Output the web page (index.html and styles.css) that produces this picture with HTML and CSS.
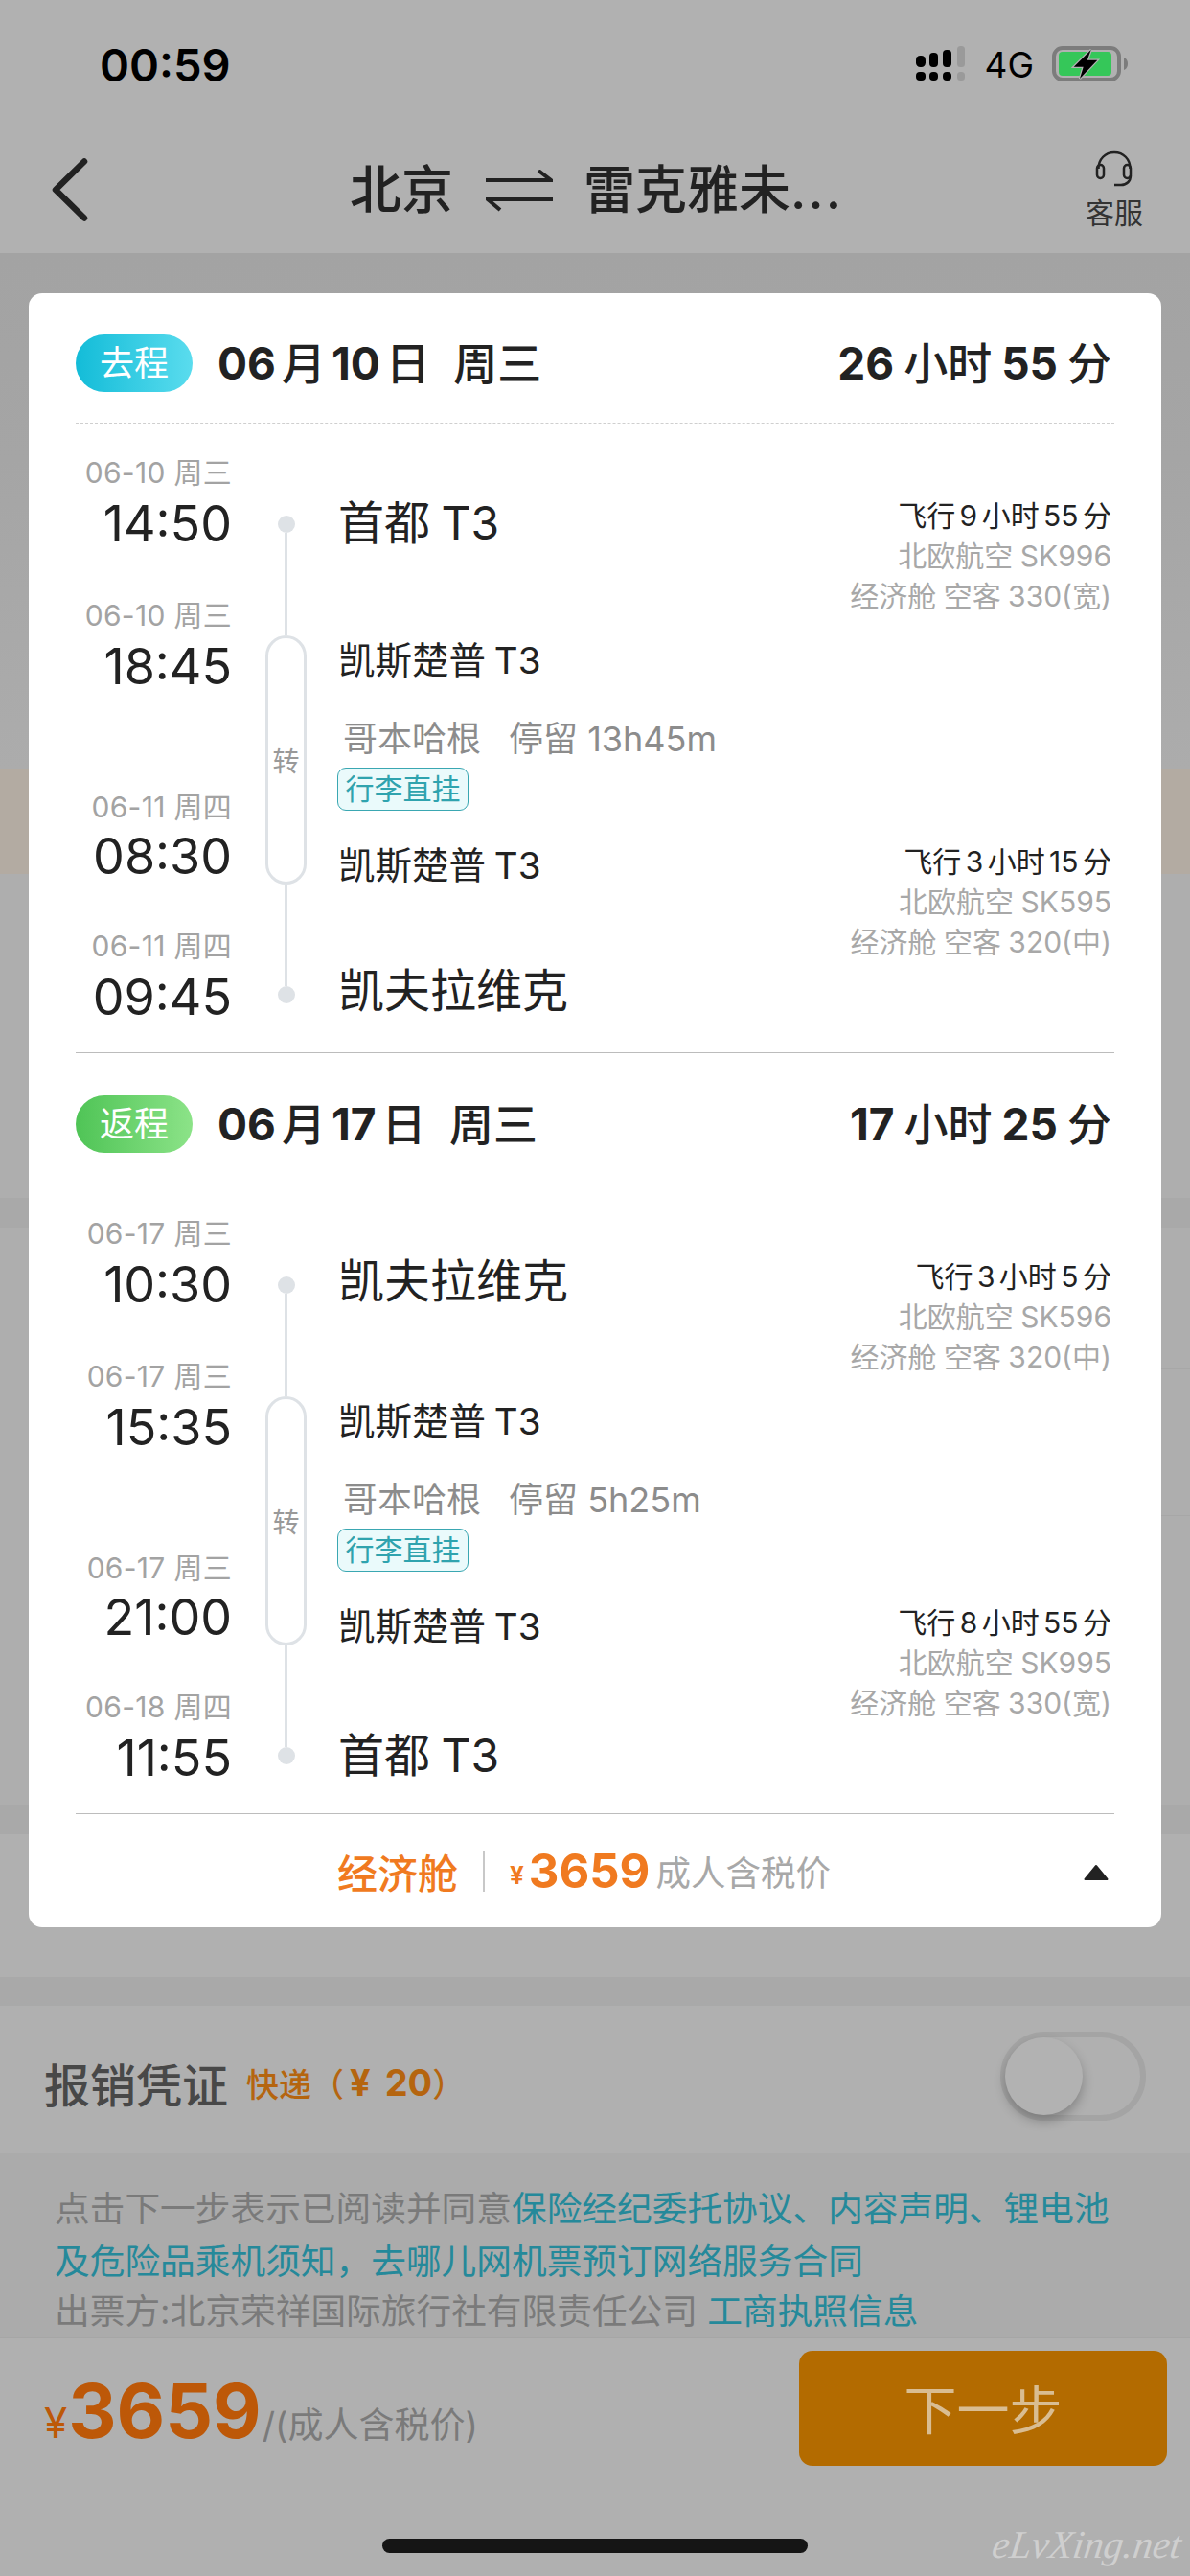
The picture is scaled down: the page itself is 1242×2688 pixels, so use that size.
FILE: index.html
```html
<!DOCTYPE html>
<html lang="zh-CN">
<head>
<meta charset="utf-8">
<title>北京 雷克雅未克</title>
<link rel="stylesheet" href="styles.css">
</head>
<body>
<div class="page">
  <header class="top">
    <div class="status">
      <span class="clock">00:59</span>
      <div class="status-right">
        <svg class="signal" width="52" height="60" viewBox="0 0 52 60">
          <rect x="0" y="16" width="10" height="12" rx="4.5" fill="#000"/>
          <rect x="14" y="13" width="9" height="15" rx="4" fill="#000"/>
          <rect x="28" y="10" width="9" height="18" rx="4" fill="#000"/>
          <rect x="43" y="6" width="8" height="22" rx="3.5" fill="#9a9a9a"/>
          <rect x="0" y="33" width="10" height="9" rx="4" fill="#000"/>
          <rect x="14" y="33" width="9" height="9" rx="4" fill="#000"/>
          <rect x="28" y="33" width="9" height="9" rx="4" fill="#000"/>
          <rect x="43" y="33" width="8" height="9" rx="3.5" fill="#9a9a9a"/>
        </svg>
        <span class="net">4G</span>
        <svg class="battery" width="80" height="38" viewBox="0 0 80 38">
          <rect x="2" y="2" width="68" height="33" rx="9" fill="none" stroke="#7c7c7c" stroke-width="4"/>
          <rect x="7" y="6" width="55" height="25" rx="4" fill="#35c759"/>
          <path d="M75 12c3 1 4 4 4 6.500s-1 5.500-4 6.500z" fill="#7c7c7c"/>
          <path d="M40.700 4L22.700 21.700H32.700L29 34L47.300 14.700H36.700z" fill="#000" stroke="#b1b1b1" stroke-width="2.500" paint-order="stroke"/>
        </svg>
      </div>
    </div>
    <nav class="nav">
      <svg class="back" width="40" height="66" viewBox="0 0 40 66">
        <path d="M35 3.500L5 33L35 62.500" fill="none" stroke="#222" stroke-width="6.500" stroke-linecap="round" stroke-linejoin="round"/>
      </svg>
      <div class="route">
        <span>北京</span>
        <svg class="swap" width="70" height="44" viewBox="0 0 70 44">
          <path d="M0 11H68L55 1M70 31H2L15 42" fill="none" stroke="#222" stroke-width="4"/>
        </svg>
        <span>雷克雅未<span class="dots">...</span></span>
      </div>
      <div class="service">
        <svg width="40" height="38" viewBox="0 0 40 38">
          <path d="M3.500 19C3.500 9 10.500 2 20 2s16.500 7 16.500 17" fill="none" stroke="#222" stroke-width="2.500"/>
          <rect x="2" y="15" width="7" height="14" rx="3.500" fill="none" stroke="#222" stroke-width="2.500"/>
          <rect x="30" y="15" width="7" height="14" rx="3.500" fill="none" stroke="#222" stroke-width="2.500"/>
          <path d="M37 26C37 32 33 36 27 36H20" fill="none" stroke="#222" stroke-width="2.500"/>
        </svg>
        <span>客服</span>
      </div>
    </nav>
  </header>

  <div class="under">
    <div class="u-fade"></div>
    <div class="u-notice"></div>
    <div class="u-rows"></div>
    <div class="u-band"></div>
    <div class="u-list">
      <div class="u-line u-line-a"></div>
      <div class="u-line u-line-b"></div>
    </div>
    <div class="u-band"></div>
    <div class="u-blank"></div>
    <div class="u-band"></div>
  </div>

  <section class="receipt">
    <div class="receipt-text">
      <span class="receipt-title">报销凭证</span>
      <span class="receipt-fee">快递（<b class="fee-yen">¥</b><b>20</b>）</span>
    </div>
    <div class="toggle"><div class="knob"></div></div>
  </section>

  <section class="notice">
    <p class="notice-line">点击下一步表示已阅读并同意<a>保险经纪委托协议、内容声明、锂电池</a></p>
    <p class="notice-line"><a>及危险品乘机须知，去哪儿网机票预订网络服务合同</a></p>
    <p class="notice-line notice-tight">出票方:北京荣祥国际旅行社有限责任公司 <a>工商执照信息</a></p>
  </section>

  <footer class="pay">
    <div class="pay-price">
      <span class="pay-yen">¥</span><span class="pay-num">3659</span><span class="pay-note">/(成人含税价)</span>
    </div>
    <button class="next">下一步</button>
  </footer>

  <div class="home-bar"></div>
  <div class="watermark">eLvXing.net</div>

  <main class="card">
    <section class="leg">
      <div class="leg-head">
        <span class="pill pill-go">去程</span>
        <span class="leg-date"><span class="num">06</span>月<span class="num">10</span>日&nbsp;&nbsp;周三</span>
        <span class="leg-total"><span class="num">26</span>小时<span class="num">55</span>分</span>
      </div>
      <div class="itin">
        <div class="times">
          <div class="tm"><div class="tm-date">06-10 周三</div><div class="tm-clock">14:50</div></div>
          <div class="tm tm-a"><div class="tm-date">06-10 周三</div><div class="tm-clock">18:45</div></div>
          <div class="tm tm-b"><div class="tm-date">06-11 周四</div><div class="tm-clock">08:30</div></div>
          <div class="tm tm-c"><div class="tm-date">06-11 周四</div><div class="tm-clock">09:45</div></div>
        </div>
        <div class="track">
          <i class="dot"></i><i class="rail"></i>
          <div class="capsule">转</div>
          <i class="rail"></i><i class="dot"></i>
        </div>
        <div class="stops">
          <div class="st-big">首都 T3</div>
          <div class="st-small st-first">凯斯楚普 T3</div>
          <div class="stay"><span>哥本哈根</span><span>停留 13h45m</span></div>
          <span class="tag">行李直挂</span>
          <div class="st-small st-after">凯斯楚普 T3</div>
          <div class="st-big st-last">凯夫拉维克</div>
        </div>
        <div class="flights">
          <div class="fl">
            <div class="fl-time">飞行 9 小时 55 分</div>
            <div>北欧航空 SK996</div>
            <div>经济舱 空客 330(宽)</div>
          </div>
          <div class="fl fl-next">
            <div class="fl-time">飞行 3 小时 15 分</div>
            <div>北欧航空 SK595</div>
            <div>经济舱 空客 320(中)</div>
          </div>
        </div>
      </div>
    </section>

    <section class="leg">
      <div class="leg-head">
        <span class="pill pill-back">返程</span>
        <span class="leg-date"><span class="num">06</span>月<span class="num">17</span>日&nbsp;&nbsp;周三</span>
        <span class="leg-total"><span class="num">17</span>小时<span class="num">25</span>分</span>
      </div>
      <div class="itin">
        <div class="times">
          <div class="tm"><div class="tm-date">06-17 周三</div><div class="tm-clock">10:30</div></div>
          <div class="tm tm-a"><div class="tm-date">06-17 周三</div><div class="tm-clock">15:35</div></div>
          <div class="tm tm-b"><div class="tm-date">06-17 周三</div><div class="tm-clock">21:00</div></div>
          <div class="tm tm-c"><div class="tm-date">06-18 周四</div><div class="tm-clock">11:55</div></div>
        </div>
        <div class="track">
          <i class="dot"></i><i class="rail"></i>
          <div class="capsule">转</div>
          <i class="rail"></i><i class="dot"></i>
        </div>
        <div class="stops">
          <div class="st-big">凯夫拉维克</div>
          <div class="st-small st-first">凯斯楚普 T3</div>
          <div class="stay"><span>哥本哈根</span><span>停留 5h25m</span></div>
          <span class="tag">行李直挂</span>
          <div class="st-small st-after">凯斯楚普 T3</div>
          <div class="st-big st-last">首都 T3</div>
        </div>
        <div class="flights">
          <div class="fl">
            <div class="fl-time">飞行 3 小时 5 分</div>
            <div>北欧航空 SK596</div>
            <div>经济舱 空客 320(中)</div>
          </div>
          <div class="fl fl-next">
            <div class="fl-time">飞行 8 小时 55 分</div>
            <div>北欧航空 SK995</div>
            <div>经济舱 空客 330(宽)</div>
          </div>
        </div>
      </div>
    </section>

    <div class="fare">
      <span class="fare-cabin">经济舱</span>
      <i class="fare-sep"></i>
      <span class="fare-yen">¥</span><span class="fare-num">3659</span><span class="fare-note">成人含税价</span>
      <svg class="fare-caret" width="26" height="18" viewBox="0 0 26 18"><path d="M13 2L24.500 16H1.500z" fill="#222" stroke="#222" stroke-width="2" stroke-linejoin="round"/></svg>
    </div>
  </main>
</div>
</body>
</html>
```
FILE: styles.css
```css
* { box-sizing: border-box; }
html, body { margin: 0; padding: 0; }
body {
  font-family: Inter, "Noto Sans CJK SC", sans-serif;
  color: #222;
  background: #b1b1b1;
}
i { display: block; }
p { margin: 0; }

.page {
  position: relative;
  width: 1242px;
  height: 2688px;
  overflow: hidden;
  background: #b1b1b1;
}

/* top bars */
.top { height: 264px; background: #b1b1b1; }
.status {
  height: 132px;
  display: flex;
  justify-content: space-between;
  align-items: flex-start;
  padding: 44px 64px 0 104px;
}
.clock {
  font-size: 47px;
  font-weight: 600;
  line-height: 48px;
  color: #000;
}
.status-right { display: flex; align-items: flex-start; }
.signal { margin: -2px 19px 0 0; }
.net {
  font-size: 37px;
  line-height: 44px;
  color: #000;
  margin-right: 19px;
  margin-top: 2px;
}
.battery { margin-top: 4px; }

.nav {
  height: 132px;
  display: flex;
  align-items: flex-start;
  padding: 0 0 0 53px;
  position: relative;
}
.back { margin-top: 33px; }
.route {
  position: absolute;
  left: 365px;
  top: 29px;
  display: flex;
  align-items: center;
  font-size: 54px;
  line-height: 76px;
  font-weight: 500;
  color: #222;
}
.dots { letter-spacing: 2px; }
.swap { margin: 0 32px 0 34px; }
.service {
  position: absolute;
  left: 1121px;
  top: 25px;
  width: 84px;
  display: flex;
  flex-direction: column;
  align-items: center;
  font-size: 30px;
  line-height: 40px;
  color: #333;
}
.service svg { display: block; margin-bottom: 7px; }

/* dim page behind the card */
.under { display: flex; flex-direction: column; }
.u-fade { height: 538px; background: linear-gradient(180deg, #a3a3a3 0, #a5a5a5 40%, #acacac 100%); }
.u-notice { height: 110px; background: #b3aba2; }
.u-rows { height: 338px; background: #aeaeae; }
.u-band { height: 31px; background: #a9a9a9; }
.u-list { height: 602px; background: #aeaeae; padding-left: 40px; }
.u-line { border-bottom: 1px solid #a7a7a7; }
.u-line-a { height: 148px; }
.u-line-b { height: 153px; }
.u-blank { height: 149px; background: #b0b0b0; }

/* card */
.card {
  position: absolute;
  left: 30px;
  top: 306px;
  width: 1182px;
  padding: 0 49px;
  background: #fff;
  border-radius: 14px;
}
.leg { padding-top: 43px; border-bottom: 1px solid #bcbcbc; }
.leg + .leg { padding-top: 44px; }
.leg-head {
  height: 93px;
  padding-bottom: 33px;
  display: flex;
  align-items: center;
  border-bottom: 1px dashed #cfcfcf;
}
.pill {
  width: 122px;
  height: 60px;
  border-radius: 30px;
  display: flex;
  align-items: center;
  justify-content: center;
  color: #fff;
  font-size: 36px;
  line-height: 60px;
}
.pill-go { background: linear-gradient(90deg, #13bcd8, #5adcee); }
.pill-back { background: linear-gradient(90deg, #4fc456, #8ce388); }
.leg-date, .leg-total {
  font-size: 46px;
  font-weight: 500;
  line-height: 60px;
  color: #222;
}
.leg-date { margin-left: 26px; }
.leg-total { margin-left: auto; margin-right: 3px; }
.num { font-weight: 700; }
.leg-date .num { margin: 0 6px; }
.leg-total .num { margin: 0 10px; }
.leg-date .num:first-child, .leg-total .num:first-child { margin-left: 0; }

.itin { display: flex; height: 656px; }
.times { width: 163px; padding-top: 33px; text-align: right; flex: none; }
.tm { height: 103px; }
.tm-a { margin-top: 46px; }
.tm-b { margin-top: 97px; }
.tm-c { margin-top: 42px; }
.tm-date {
  font-size: 30px;
  line-height: 36px;
  color: #a3a3a3;
  margin-bottom: 5px;
  letter-spacing: .3px;
}
.tm-clock {
  font-size: 52px;
  line-height: 62px;
  color: #222;
}
.tm-b .tm-clock { margin-top: -2px; }

.track {
  width: 43px;
  margin-left: 35px;
  padding-top: 96px;
  height: 605px;
  flex: none;
  display: flex;
  flex-direction: column;
  align-items: center;
}
.dot { width: 18px; height: 18px; border-radius: 50%; background: #dee2e6; flex: none; }
.rail { width: 3px; flex: 1; background: #dee2e6; }
.capsule {
  width: 43px;
  height: 260px;
  flex: none;
  border: 3px solid #dee2e6;
  border-radius: 22px;
  display: flex;
  align-items: center;
  justify-content: center;
  font-size: 28px;
  color: #999;
}

.stops { margin-left: 33px; padding-top: 74px; flex: none; width: 420px; }
.st-big { font-size: 48px; line-height: 60px; color: #222; word-spacing: -2px; }
.st-small { font-size: 38.500px; line-height: 50px; color: #222; word-spacing: -2px; }
.st-first { margin-top: 88px; }
.st-after { margin-top: 32px; }
.st-last { margin-top: 76px; }
.leg + .leg .stops { padding-top: 71px; }
.leg + .leg .st-first { margin-top: 91px; }
.leg + .leg .st-last { margin-top: 80px; }
.stay {
  margin: 32px 0 5px 5px;
  font-size: 36px;
  line-height: 50px;
  color: #8c8c8c;
  display: flex;
  gap: 29px;
  white-space: nowrap;
}
.tag {
  display: block;
  width: 137px;
  height: 45px;
  margin-left: -1px;
  border: 1px solid #3aa7b2;
  border-radius: 9px;
  background: #eafafb;
  color: #2fa3ae;
  font-size: 30px;
  line-height: 43px;
  text-align: center;
  white-space: nowrap;
}

.flights {
  margin-left: auto;
  margin-right: 3px;
  padding-top: 75px;
  text-align: right;
  font-size: 30px;
  line-height: 42px;
  color: #a8a8a8;
  word-spacing: -1px;
}
.fl { height: 126px; white-space: nowrap; }
.fl-next { margin-top: 235px; }
.fl-time { color: #222; word-spacing: -4px; }

/* price summary */
.fare {
  height: 118px;
  display: flex;
  align-items: center;
  padding-left: 273px;
  position: relative;
}
.fare-cabin { font-size: 42px; font-weight: 500; color: #f07a20; }
.fare-sep { width: 2px; height: 43px; background: #c8c8c8; margin: 0 26px; }
.fare-yen { font-size: 26px; font-weight: 700; color: #f07a20; margin: 8px 5px 0 0; }
.fare-num { font-size: 49px; font-weight: 700; color: #f07a20; }
.fare-note { font-size: 36.500px; color: #a8a8a8; margin-left: 6px; }
.fare-caret { position: absolute; right: 6px; top: 52px; }

/* rows over the dim page */
.receipt {
  position: absolute;
  left: 0;
  top: 2093px;
  width: 1242px;
  height: 154px;
  padding: 0 46px;
  display: flex;
  align-items: center;
  background: #b0b0b0;
}
.receipt-text { display: flex; align-items: center; margin-top: 6px; }
.receipt-title { font-size: 48px; font-weight: 500; color: #484848; }
.receipt-fee { font-size: 34px; font-weight: 500; color: #b5650f; margin-left: 19px; display: flex; align-items: center; }
.receipt-fee b { font-size: 38px; font-weight: 700; }
.fee-yen { margin: 0 15px 0 6px; font-size: 32px; }
.toggle {
  margin-left: auto;
  width: 152px;
  height: 93px;
  margin-top: -8px;
  border: 6px solid #a4a4a4;
  border-radius: 47px;
  position: relative;
}
.knob {
  position: absolute;
  left: -1px;
  top: 0;
  width: 81px;
  height: 81px;
  border-radius: 50%;
  background: #b2b2b2;
  box-shadow: 0 6px 12px rgba(0,0,0,.25);
}

.notice {
  position: absolute;
  left: 0;
  top: 2247px;
  width: 1242px;
  height: 193px;
  padding: 30px 0 0 57px;
  background: #ababab;
  border-bottom: 1px solid #a6a6a6;
  color: #7a7a7a;
  font-size: 36.700px;
  white-space: nowrap;
}
.notice-line { line-height: 55px; }
.notice-tight { line-height: 50px; }
.notice a { color: #25899a; }

.pay {
  position: absolute;
  left: 0;
  top: 2440px;
  width: 1242px;
  height: 248px;
  background: #b0b0b0;
  padding: 13px 24px 0 46px;
  display: flex;
  justify-content: space-between;
  align-items: flex-start;
}
.pay-price { display: flex; align-items: baseline; margin-top: 17px; line-height: 92px; }
.pay-yen { font-size: 44px; font-weight: 400; color: #bd5808; }
.pay-num { font-size: 78px; font-weight: 700; color: #bd5808; margin-left: 1px; }
.pay-note { font-size: 37px; color: #7a7a7a; margin-left: 1px; }
.next {
  width: 384px;
  height: 120px;
  border: 0;
  border-radius: 14px;
  background: #b36b00;
  color: #d9bd92;
  font-family: inherit;
  font-size: 55px;
  padding: 0 0 4px;
}

.home-bar {
  position: absolute;
  left: 399px;
  top: 2649px;
  width: 444px;
  height: 15px;
  border-radius: 8px;
  background: #151515;
}
.watermark {
  position: absolute;
  left: 1036px;
  top: 2630px;
  font-family: "Liberation Serif", serif;
  font-style: italic;
  font-size: 41px;
  line-height: 50px;
  color: #cfcfcf;
  transform: skewX(-8deg);
  white-space: nowrap;
}
```
